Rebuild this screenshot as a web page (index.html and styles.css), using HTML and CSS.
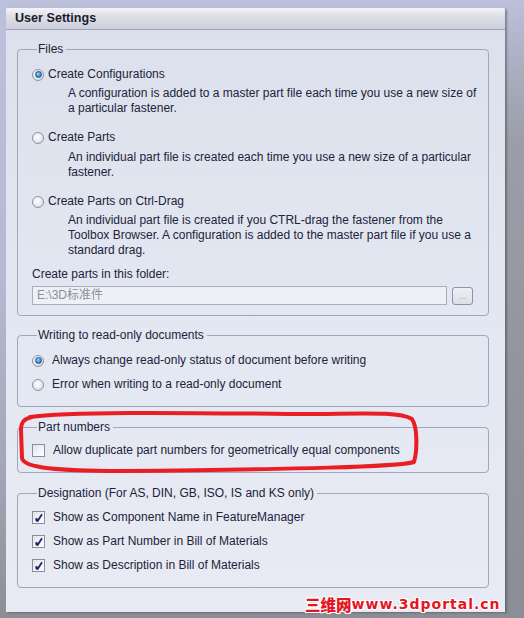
FILE: index.html
```html
<!DOCTYPE html>
<html>
<head>
<meta charset="utf-8">
<link rel="stylesheet" href="styles.css">
</head>
<body>
<div class="stage">
  <div class="dialog">
    <div class="titlebar">User Settings</div>
    <div class="content">
      <fieldset class="group g-files">
        <legend>Files</legend>
        <div class="opt first">
          <div class="row"><span class="radio on"></span><span class="lbl">Create Configurations</span></div>
          <div class="desc">A configuration is added to a master part file each time you use a new size of<br>a particular fastener.</div>
        </div>
        <div class="opt">
          <div class="row"><span class="radio"></span><span class="lbl">Create Parts</span></div>
          <div class="desc d5">An individual part file is created each time you use a new size of a particular<br>fastener.</div>
        </div>
        <div class="opt">
          <div class="row"><span class="radio"></span><span class="lbl">Create Parts on Ctrl-Drag</span></div>
          <div class="desc">An individual part file is created if you CTRL-drag the fastener from the<br>Toolbox Browser. A configuration is added to the master part file if you use a<br>standard drag.</div>
        </div>
        <div class="folder-label">Create parts in this folder:</div>
        <div class="folder-row">
          <div class="path">E:\3D标准件</div>
          <div class="browse">...</div>
        </div>
      </fieldset>

      <fieldset class="group g-write">
        <legend>Writing to read-only documents</legend>
        <div class="row wide first"><span class="radio on"></span><span class="lbl">Always change read-only status of document before writing</span></div>
        <div class="row wide next"><span class="radio"></span><span class="lbl">Error when writing to a read-only document</span></div>
      </fieldset>

      <fieldset class="group g-part">
        <legend>Part numbers</legend>
        <div class="row wide first"><span class="check"></span><span class="lbl">Allow duplicate part numbers for geometrically equal components</span></div>
      </fieldset>

      <fieldset class="group g-desig">
        <legend>Designation (For AS, DIN, GB, ISO, IS and KS only)</legend>
        <div class="row wide first"><span class="check on"><svg viewBox="0 0 11 11" width="11" height="11"><path d="M3 6.2 L4.6 9 L9 2.2" fill="none" stroke="#23237a" stroke-width="1.8" stroke-linejoin="round"/><path d="M3.2 7.2 L4.4 9.2" stroke="#23237a" stroke-width="2.6"/></svg></span><span class="lbl">Show as Component Name in FeatureManager</span></div>
        <div class="row wide next"><span class="check on"><svg viewBox="0 0 11 11" width="11" height="11"><path d="M3 6.2 L4.6 9 L9 2.2" fill="none" stroke="#23237a" stroke-width="1.8" stroke-linejoin="round"/><path d="M3.2 7.2 L4.4 9.2" stroke="#23237a" stroke-width="2.6"/></svg></span><span class="lbl">Show as Part Number in Bill of Materials</span></div>
        <div class="row wide next"><span class="check on"><svg viewBox="0 0 11 11" width="11" height="11"><path d="M3 6.2 L4.6 9 L9 2.2" fill="none" stroke="#23237a" stroke-width="1.8" stroke-linejoin="round"/><path d="M3.2 7.2 L4.4 9.2" stroke="#23237a" stroke-width="2.6"/></svg></span><span class="lbl">Show as Description in Bill of Materials</span></div>
      </fieldset>
    </div>
  </div>
  <svg class="annot" width="524" height="618" viewBox="0 0 524 618">
    <path d="M30 417 C70 411, 200 413, 300 414 C360 414, 398 411, 412 419 C418 428, 417 452, 414 462 C398 467, 300 469, 120 471 C60 471, 23 468, 22 458 L21 430 C21 422, 24 419, 32 417" fill="none" stroke="#ea1c24" stroke-width="4" stroke-linejoin="round" stroke-linecap="round"/>
  </svg>
  <div class="watermark"><span class="wm-cn">三维网</span><span class="wm-en">www.3dportal.cn</span></div>
</div>
</body>
</html>
```

FILE: styles.css
```css
html, body {
  margin: 0;
  padding: 0;
}
body {
  width: 524px;
  height: 618px;
  overflow: hidden;
  background:
    linear-gradient(to bottom, rgba(150,152,160,0) 0px, rgba(150,152,160,0.85) 140px, rgba(140,142,150,1) 618px) right top / 19px 618px no-repeat,
    linear-gradient(to bottom, #bcc0da 0%, #b5b9d2 45%, #a4a7b8 75%, #8c8e95 100%);
  font-family: "Liberation Sans", Arial, sans-serif;
  font-size: 12px;
  color: #22223a;
}
.stage {
  position: relative;
  width: 524px;
  height: 618px;
  padding: 8px 0 0 6px;
  box-sizing: border-box;
}
.dialog {
  width: 499px;
  height: 604px;
  display: flex;
  flex-direction: column;
  background: linear-gradient(to bottom, #dbe0ec 0%, #e3e7f1 50%, #e8ebf4 100%);
  box-shadow: 2px 1px 2px rgba(60,60,70,0.45);
  border-radius: 2px 2px 0 0;
}
.titlebar {
  height: 22px;
  box-sizing: border-box;
  border-bottom: 1px solid #9ca0ba;
  background: linear-gradient(to bottom, #f3f4f7 0%, #dfe1e8 35%, #cdd0db 100%);
  border-radius: 2px 2px 0 0;
  font-weight: bold;
  font-size: 12.6px;
  line-height: 21px;
  padding-left: 9px;
  color: #1c1c2c;
}
.content {
  padding: 12px 16px 0 11px;
  display: flex;
  flex-direction: column;
}
.group {
  margin: 0;
  padding: 0 0 0 14px;
  border: 1px solid #a2a5bd;
  border-radius: 4px;
  min-width: 0;
}
.group legend {
  margin-left: 5px;
  padding: 0 3px 0 1px;
  line-height: 14px;
  height: 14px;
}
.g-files { padding-bottom: 10px; }
.g-write { margin-top: 12px; padding-bottom: 14px; }
.g-part { margin-top: 13px; padding-bottom: 14px; }
.g-desig { margin-top: 13px; padding-bottom: 14px; }

.row {
  display: flex;
  align-items: center;
  height: 15px;
  line-height: 15px;
}
.row .lbl { margin-left: 4px; }
.row.wide .lbl { margin-left: 8px; }
.opt { margin-top: 14px; }
.opt.first { margin-top: 11px; }
.g-write .row.first { margin-top: 11px; }
.g-part .row.first { margin-top: 9px; }
.g-desig .row.first { margin-top: 10px; }
.row.next { margin-top: 9px; }

.desc {
  margin-top: 4px;
  margin-left: 36px;
  line-height: 15px;
}
.desc.d5 { margin-top: 5px; }

.radio {
  width: 12px;
  height: 12px;
  box-sizing: border-box;
  border-radius: 50%;
  border: 1px solid #8e92a6;
  background: radial-gradient(circle at 45% 40%, #ffffff 0%, #eceef3 45%, #c9ccd6 100%);
  position: relative;
  flex: none;
}
.radio.on::after {
  content: "";
  position: absolute;
  left: 1.5px;
  top: 1.5px;
  width: 7px;
  height: 7px;
  box-sizing: border-box;
  border-radius: 50%;
  border: 1px solid #1e4f82;
  background: radial-gradient(circle at 40% 35%, #8fd4fa 0%, #3a9bd8 55%, #1d64a8 100%);
}
.check {
  width: 13px;
  height: 13px;
  box-sizing: border-box;
  border: 1px solid #8a8d9e;
  background: linear-gradient(135deg, #dfe1e8 0%, #f4f5f8 60%, #ffffff 100%);
  flex: none;
  display: flex;
  align-items: center;
  justify-content: center;
}
.check svg { display: block; }

.folder-label {
  margin-top: 9px;
  line-height: 15px;
}
.folder-row {
  margin-top: 4px;
  display: flex;
  align-items: center;
}
.path {
  width: 415px;
  height: 19px;
  box-sizing: border-box;
  border: 1px solid #abadbe;
  background: #eef0f5;
  color: #8c8e9c;
  padding-left: 4px;
  line-height: 17px;
  font-family: "Liberation Sans", "Noto Sans CJK SC", sans-serif;
}
.browse {
  margin-left: 5px;
  width: 21px;
  height: 18px;
  box-sizing: border-box;
  border: 1px solid #8f92a8;
  border-radius: 3px;
  background: linear-gradient(to bottom, #eef0f5 0%, #dcdfe8 100%);
  color: #a0a3b4;
  font-size: 9px;
  line-height: 17px;
  text-align: center;
}

.annot {
  position: absolute;
  left: 0;
  top: 0;
  pointer-events: none;
}
.watermark {
  position: absolute;
  left: 305px;
  top: 596px;
  height: 17px;
  display: flex;
  align-items: center;
  color: #e4161f;
  font-weight: bold;
  text-shadow: 1px 0 0 #fff, -1px 0 0 #fff, 0 1px 0 #fff, 0 -1px 0 #fff, 1px 1px 0 #fff, -1px -1px 0 #fff, 1px -1px 0 #fff, -1px 1px 0 #fff;
  white-space: nowrap;
}
.wm-cn {
  font-family: "Noto Sans CJK SC", sans-serif;
  font-size: 15.5px;
  font-weight: 900;
  line-height: 17px;
}
.wm-en {
  font-family: "DejaVu Sans", sans-serif;
  font-size: 14px;
  line-height: 17px;
  letter-spacing: 1px;
}
```
